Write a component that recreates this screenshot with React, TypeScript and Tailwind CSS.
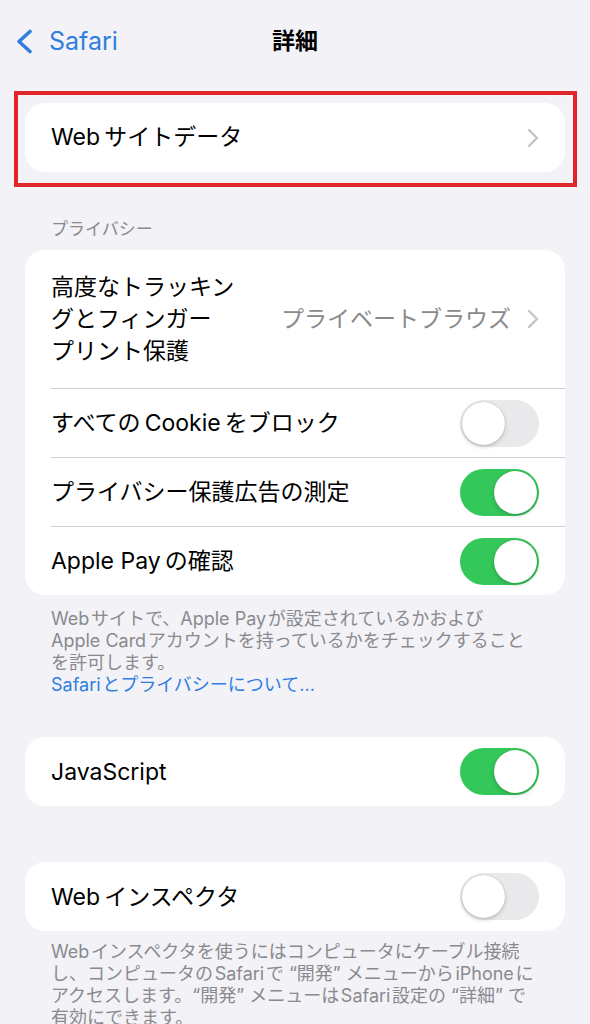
import React from "react";

const font = "font-['Inter','Noto_Sans_CJK_JP',sans-serif]";

const Chevron: React.FC = () => (
  <svg width="12" height="20" viewBox="0 0 12 20" fill="none">
    <polyline
      points="2,2 10,10 2,18"
      stroke="#c4c4c7"
      strokeWidth="2.4"
      strokeLinecap="round"
      strokeLinejoin="round"
    />
  </svg>
);

const Toggle: React.FC<{ on: boolean }> = ({ on }) => (
  <div
    className={`flex h-[47px] w-[79px] shrink-0 items-center rounded-full p-[2px] ${
      on ? "justify-end bg-[#34c759]" : "justify-start bg-[#e9e9eb]"
    }`}
  >
    <div className="h-[43px] w-[43px] rounded-full bg-white shadow-[0_2px_4px_rgba(0,0,0,0.18),0_0_1px_rgba(0,0,0,0.25)]" />
  </div>
);

type RowProps = {
  label: React.ReactNode;
  on: boolean;
  divider?: boolean;
};

const ToggleRow: React.FC<RowProps> = ({ label, on, divider }) => (
  <div className="pl-[26px]">
    <div
      className={`flex h-[69px] items-center justify-between pr-[26px] ${
        divider ? "border-t border-[#d1d1d6]" : ""
      }`}
    >
      <span className="text-[23px] leading-[32px] text-black">{label}</span>
      <Toggle on={on} />
    </div>
  </div>
);

const Footer: React.FC<{ children: React.ReactNode }> = ({ children }) => (
  <div className="whitespace-nowrap px-[51px] text-[18px] leading-[22px] text-[#8a8a8e]">
    {children}
  </div>
);

export default function App() {
  return (
    <div className={`${font} h-[1024px] w-[590px] overflow-hidden bg-[#f2f2f7]`}>
      {/* nav bar */}
      <div className="relative flex h-[82px] items-center">
        <div className="flex items-center pl-[15px] text-[#2f7ee0]">
          <svg width="19" height="25" viewBox="0 0 19 25" fill="none">
            <polyline
              points="15,2.5 4,12.5 15,22.5"
              stroke="#2f7ee0"
              strokeWidth="3.6"
              strokeLinecap="round"
              strokeLinejoin="round"
            />
          </svg>
          <span className="ml-[15px] text-[25px] leading-none">Safari</span>
        </div>
        <div className="absolute left-0 right-0 text-center text-[23px] font-bold leading-none text-black">
          詳細
        </div>
      </div>

      {/* highlighted card */}
      <div className="ml-[14px] mt-[9px] w-[563px] border-4 border-[#e0252b] pb-[11px] pl-[7px] pr-[8px] pt-[8px]">
        <div className="flex h-[69px] items-center justify-between rounded-[20px] bg-white pl-[26px] pr-[26px]">
          <span className="text-[23px] text-black">Web&#8201;サイトデータ</span>
          <Chevron />
        </div>
      </div>

      {/* privacy section */}
      <div className="mt-[30px] px-[51px] text-[17px] leading-[24px] text-[#8a8a8e]">
        プライバシー
      </div>
      <div className="ml-[25px] mt-[9px] w-[540px] overflow-hidden rounded-[20px] bg-white">
        <div className="flex h-[138px] items-center justify-between pl-[26px] pr-[26px]">
          <span className="text-[23px] leading-[32px] text-black">
            高度なトラッキン
            <br />
            グとフィンガー
            <br />
            プリント保護
          </span>
          <div className="flex items-center gap-[16px]">
            <span className="text-[23px] text-[#8a8a8e]">プライベートブラウズ</span>
            <Chevron />
          </div>
        </div>
        <ToggleRow label={<>すべての&#8201;Cookie&#8201;をブロック</>} on={false} divider />
        <ToggleRow label="プライバシー保護広告の測定" on divider />
        <ToggleRow label={<>Apple Pay&#8201;の確認</>} on divider />
      </div>

      <div className="mt-[13px]">
        <Footer>
          Web&#8202;サイトで、Apple Pay&#8202;が設定されているかおよび
          <br />
          Apple Card&#8202;アカウントを持っているかをチェックすること
          <br />
          を許可します。
          <br />
          <span className="text-[#2f7ee0]">Safari&#8202;とプライバシーについて...</span>
        </Footer>
      </div>

      {/* JavaScript */}
      <div className="ml-[25px] mt-[41px] w-[540px] rounded-[20px] bg-white">
        <ToggleRow label="JavaScript" on />
      </div>

      {/* Web inspector */}
      <div className="ml-[25px] mt-[56px] w-[540px] rounded-[20px] bg-white">
        <ToggleRow label={<>Web&#8201;インスペクタ</>} on={false} />
      </div>

      <div className="mt-[10px]">
        <Footer>
          Web&#8202;インスペクタを使うにはコンピュータにケーブル接続
          <br />
          し、コンピュータの&#8202;Safari&#8202;で “開発” メニューから&#8202;iPhone&#8202;に
          <br />
          アクセスします。“開発” メニューは&#8202;Safari&#8202;設定の “詳細” で
          <br />
          有効にできます。
        </Footer>
      </div>
    </div>
  );
}
